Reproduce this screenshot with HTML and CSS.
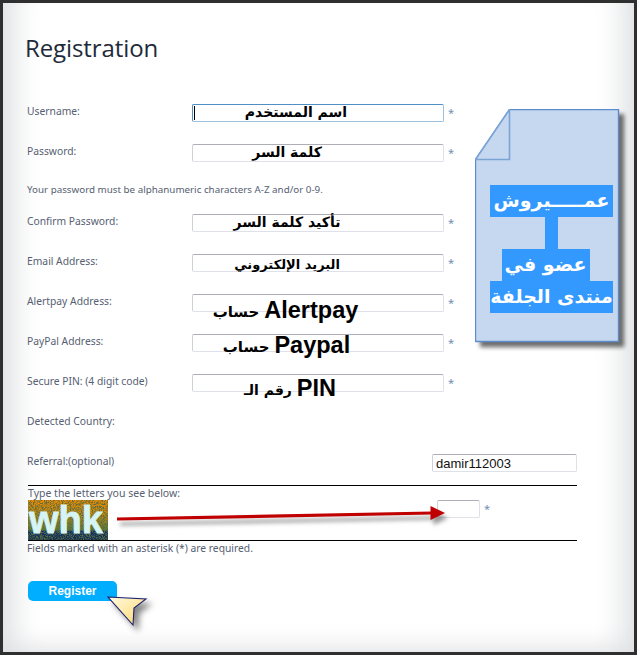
FILE: index.html
```html
<!DOCTYPE html>
<html lang="en">
<head>
  <meta charset="UTF-8">
  <meta name="viewport" content="width=device-width, initial-scale=1.0">
  <title>Registration</title>
  <link rel="stylesheet" href="styles.css">
</head>
<body>
  <div class="window">
    <h1>Registration</h1>
    <form class="reg-form">
      <div class="row">
        <label for="username">Username:</label>
        <div class="field">
          <input class="focused" type="text" id="username">
          <span class="caret"></span>
          <span class="note note-user" dir="rtl">اسم المستخدم</span>
        </div>
        <span class="star">*</span>
      </div>
      <div class="row row-short">
        <label for="password">Password:</label>
        <div class="field">
          <input type="text" id="password">
          <span class="note" dir="rtl">كلمة السر</span>
        </div>
        <span class="star">*</span>
      </div>
      <p class="hint">Your password must be alphanumeric characters A-Z and/or 0-9.</p>
      <div class="row">
        <label for="confirm">Confirm Password:</label>
        <div class="field">
          <input type="text" id="confirm">
          <span class="note" dir="rtl">تأكيد كلمة السر</span>
        </div>
        <span class="star">*</span>
      </div>
      <div class="row">
        <label for="email">Email Address:</label>
        <div class="field">
          <input type="text" id="email">
          <span class="note note-small" dir="rtl">البريد الإلكتروني</span>
        </div>
        <span class="star">*</span>
      </div>
      <div class="row">
        <label for="alertpay">Alertpay Address:</label>
        <div class="field">
          <input type="text" id="alertpay">
          <span class="note note-alert"><span class="ar">حساب</span> <b>Alertpay</b></span>
        </div>
        <span class="star">*</span>
      </div>
      <div class="row">
        <label for="paypal">PayPal Address:</label>
        <div class="field">
          <input type="text" id="paypal">
          <span class="note note-paypal"><span class="ar">حساب</span> <b>Paypal</b></span>
        </div>
        <span class="star">*</span>
      </div>
      <div class="row">
        <label for="pin">Secure PIN: (4 digit code)</label>
        <div class="field">
          <input type="text" id="pin">
          <span class="note note-pin"><span class="ar">رقم الـ</span> <b>PIN</b></span>
        </div>
        <span class="star">*</span>
      </div>
      <div class="row">
        <label>Detected Country:</label>
      </div>
      <div class="row row-referral">
        <label for="referral">Referral:(optional)</label>
        <input class="referral" type="text" id="referral" value="damir112003">
      </div>

      <div class="captcha">
        <div class="captcha-title">Type the letters you see below:</div>
        <div class="captcha-row">
          <svg class="captcha-img" width="80" height="40" viewBox="0 0 80 40">
            <defs>
              <linearGradient id="capBg" x1="0" y1="0" x2="0" y2="1">
                <stop offset="0" stop-color="#f08a00"/>
                <stop offset="0.35" stop-color="#c78a10"/>
                <stop offset="0.75" stop-color="#5a7a35"/>
                <stop offset="0.78" stop-color="#12306a"/>
                <stop offset="1" stop-color="#0c2a55"/>
              </linearGradient>
              <filter id="capNoise" x="0" y="0" width="100%" height="100%">
                <feTurbulence type="fractalNoise" baseFrequency="1.1" numOctaves="2" seed="4"/>
                <feColorMatrix values="0 0 0 0 0.1  0 0 0 0 0.15  0 0 0 0 0.05  2.4 2.4 0 0 -2"/>
              </filter>
            </defs>
            <rect width="80" height="40" fill="url(#capBg)"/>
            <rect width="80" height="40" filter="url(#capNoise)"/>
            <text x="1" y="33" class="captcha-text">whk</text>
          </svg>
          <input class="captcha-input" type="text">
          <span class="star">*</span>
        </div>
      </div>
      <p class="required">Fields marked with an asterisk (*) are required.</p>
      <button class="register" type="button">Register</button>
    </form>

    <!-- member badge, sits on top of the form -->
    <div class="badge">
      <svg class="badge-sheet" width="154" height="242" viewBox="0 0 154 242">
        <path d="M34.5 .5H143.5V232.5H.5V50.5Z" fill="#c6d8f0" stroke="#5b8ccb" stroke-width="1.4"/>
        <path d="M34.5 .5V50.5H.5Z" fill="#c6d8f0" stroke="#7ba3d6" stroke-width="1.6"/>
      </svg>
      <div class="badge-labels">
        <div class="badge-box badge-wide">عمـــــيروش</div>
        <div class="badge-link"></div>
        <div class="badge-box badge-mid">عضو في</div>
        <div class="badge-box badge-wide">منتدى الجلفة</div>
      </div>
    </div>

    <svg class="arrow" width="345" height="30" viewBox="0 0 345 30">
      <path d="M3 19 L318 13" stroke="#c00000" stroke-width="3.2" fill="none"/>
      <path d="M316.500 6 L331 13 L316.500 20Z" fill="#c00000"/>
    </svg>

    <svg class="pointer" width="52" height="44" viewBox="0 0 52 44">
      <defs>
        <linearGradient id="ptrFill" x1="0" y1="0" x2="1" y2="1">
          <stop offset="0" stop-color="#fffbe2"/>
          <stop offset="1" stop-color="#ffd76a"/>
        </linearGradient>
      </defs>
      <path d="M2 3 L40 5 L28 14 L27 31Z" fill="url(#ptrFill)" stroke="#1c2270" stroke-width="1.1"/>
    </svg>
  </div>
</body>
</html>
```

FILE: styles.css
```css
* {
  box-sizing: border-box;
}

body {
  margin: 0;
  background-color: #2f2f2f;
}

.window {
  position: relative;
  width: 637px;
  height: 655px;
  border: 3px solid #2f2f2f;
  padding: 0 57px 0 24px;
  background-color: #fff;
  box-shadow: inset 35px 0 30px -25px #dcdee0, inset -35px 0 30px -25px #dcdee0, inset 0 -25px 25px -20px #e2e3e5;
  font-family: "Noto Sans", sans-serif;
  font-size: 10.5px;
  color: #566072;
  overflow: hidden;
}

h1 {
  margin: 0 0 0 -2px;
  padding-top: 28px;
  height: 101px;
  font-family: "Open Sans", sans-serif;
  font-weight: 400;
  font-size: 24px;
  line-height: 34px;
  color: #1e2a3a;
  letter-spacing: -0.1px;
}

.row {
  display: flex;
  height: 40px;
  align-items: flex-start;
}

.row-short {
  height: 30px;
}

.row label {
  width: 165px;
  font-size: 10.3px;
  line-height: 14px;
}

.field {
  position: relative;
  width: 252px;
  height: 18px;
}

input {
  display: block;
  width: 100%;
  height: 18px;
  padding: 0 3px;
  border: 1px solid #dfe1ea;
  border-top-color: #aeaeb6;
  border-left-color: #d0d0d8;
  border-radius: 2px;
  background-color: #fff;
  outline: none;
}

input.focused {
  border-color: #9fc0dc;
  border-top-color: #4f8fc4;
  border-left-color: #4f8fc4;
}

.caret {
  position: absolute;
  left: 2px;
  top: 2px;
  width: 1px;
  height: 14px;
  background-color: #000;
}

.note {
  position: absolute;
  left: 0;
  top: -3px;
  width: 190px;
  text-align: center;
  white-space: nowrap;
  font-family: "DejaVu Sans", sans-serif;
  font-weight: 700;
  font-size: 14px;
  line-height: 22px;
  color: #000;
}

.note-user {
  width: 208px;
}

.note-small {
  font-size: 13px;
  top: 0;
}

.note-alert {
  top: 5px;
  width: 187px;
}

.note-paypal {
  top: 0;
  width: 189px;
}

.note-pin {
  top: 3px;
  width: 196px;
}

.note b {
  font-family: "Liberation Sans", sans-serif;
  font-size: 23.500px;
  vertical-align: -1px;
}

.note .ar {
  font-size: 15px;
}

.note-pin .ar {
  font-size: 14px;
}

.star {
  margin-left: 4px;
  font-size: 11px;
  line-height: 18px;
  color: #6f8fb5;
}

.hint {
  margin: 0;
  height: 40px;
  padding-top: 9px;
  font-size: 9.8px;
  line-height: 14px;
}

.row-referral {
  height: 31px;
  justify-content: space-between;
}

.referral {
  width: 145px;
  font-family: "Liberation Sans", sans-serif;
  font-size: 13px;
  color: #111;
}

.captcha {
  margin-left: 1px;
  height: 56px;
  border-top: 1px solid #000;
  border-bottom: 1px solid #000;
}

.captcha-title {
  height: 14px;
  line-height: 14px;
}

.captcha-row {
  display: flex;
  align-items: flex-start;
}

.captcha-img {
  display: block;
  flex: none;
}

.captcha-text {
  font-family: "Liberation Sans", sans-serif;
  font-weight: 700;
  font-size: 38px;
  fill: #d6f4f4;
  stroke: #d6f4f4;
  stroke-width: 0.8px;
}

.captcha-input {
  width: 43px;
  margin-left: 329px;
}

.required {
  margin: 0;
  height: 40px;
  font-size: 10.3px;
  line-height: 14px;
}

.register {
  display: block;
  width: 89px;
  height: 20px;
  margin-left: 1px;
  padding: 0;
  border: none;
  border-radius: 5px;
  background-color: #00aeff;
  font-family: "Liberation Sans", sans-serif;
  font-weight: 700;
  font-size: 12px;
  color: #fff;
}

.badge {
  position: absolute;
  left: 472px;
  top: 106px;
  width: 154px;
  height: 242px;
}

.badge-sheet {
  display: block;
  filter: drop-shadow(5px 5px 2px rgba(60, 60, 60, 0.75));
}

.badge-labels {
  position: absolute;
  left: 15px;
  top: 76px;
  width: 123px;
  display: flex;
  flex-direction: column;
  align-items: center;
  direction: rtl;
}

.badge-box {
  height: 32px;
  background-color: #3399ff;
  font-family: "DejaVu Sans", sans-serif;
  font-weight: 700;
  font-size: 19px;
  line-height: 30px;
  text-align: center;
  white-space: nowrap;
  color: #fff;
}

.badge-wide {
  width: 123px;
}

.badge-mid {
  width: 88px;
  margin-right: 12px;
}

.badge-link {
  width: 13px;
  height: 32px;
  background-color: #3399ff;
}

.arrow {
  position: absolute;
  left: 111px;
  top: 497px;
  filter: drop-shadow(3px 5px 2px rgba(70, 70, 70, 0.55));
}

.pointer {
  position: absolute;
  left: 103px;
  top: 591px;
  filter: drop-shadow(5px 5px 3px rgba(50, 50, 50, 0.6));
}
```
